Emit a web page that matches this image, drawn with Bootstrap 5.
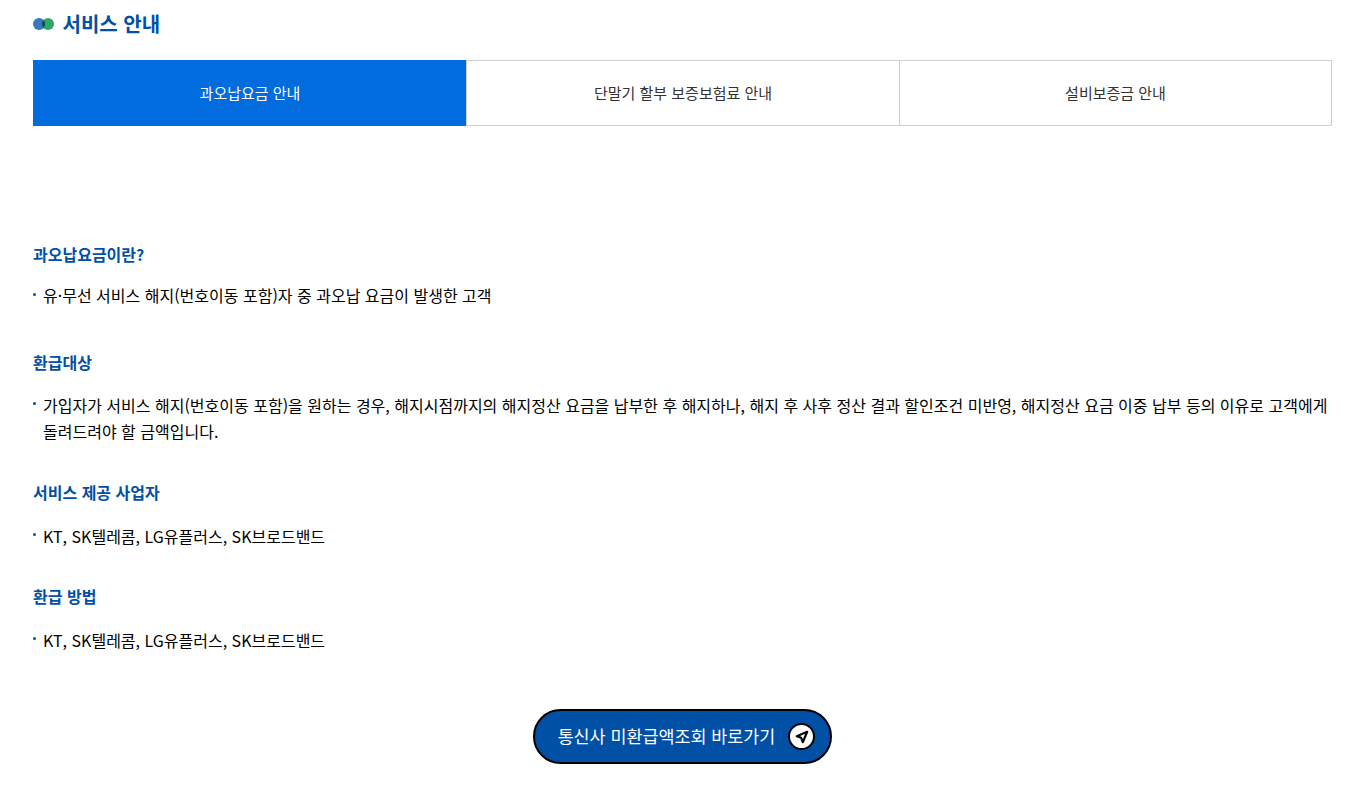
<!DOCTYPE html>
<html lang="ko">
<head>
  <meta charset="UTF-8">
  <title>서비스 안내</title>
  <meta name="viewport" content="width=device-width, initial-scale=1">
  <link href="https://cdn.jsdelivr.net/npm/bootstrap@5.3.3/dist/css/bootstrap.min.css" rel="stylesheet">
  <style>
    body { font-family: "Noto Sans CJK KR", "Noto Sans", sans-serif; color: #000; background: #fff; }
    .page-wrap { padding: 0 37px 0 33px; }
    .page-title { height: 60px; padding-bottom: 12px; color: #0050a5; font-size: 20px; font-weight: 700; gap: 8.5px; margin: 0; }
    .tab-row { height: 66px; }
    .tab-item { flex: 1 1 33.33%; border: 1px solid #d0d0d0; border-right: 0; font-size: 15px; color: #333; text-decoration: none; }
    .tab-item:last-child { border-right: 1px solid #d0d0d0; }
    .tab-item.on { background: #006cdd; border-color: #006cdd; color: #fff; }
    .info-head { color: #0050a5; font-size: 16px; font-weight: 700; line-height: 22px; margin: 0; }
    .info-list { list-style: none; padding: 0; margin: 0; font-size: 16px; line-height: 26px; }
    .info-list li { position: relative; padding-left: 10px; }
    .info-list li::before { content: ""; position: absolute; left: 0; top: 10px; width: 3px; height: 3px; border-radius: 50%; background: #0050a5; }
    .gap-first li::before { top: 11px; }
    .go-btn { width: 299px; height: 55px; padding-left: 8px; background: #0050a5; border: 2px solid #000; border-radius: 28px; color: #fff; font-size: 17.4px; gap: 13px; text-decoration: none; }
    .go-icon { width: 27px; height: 27px; background: #fff; border: 2px solid #000; border-radius: 50%; }
    .sec-first { margin-top: 117px; }
    .sec-two { margin-top: 43px; }
    .sec-three { margin-top: 37px; }
    .sec-four { margin-top: 36px; }
    .gap-first { margin-top: 17px; }
    .gap-one { margin-top: 19px; }
    .gap-two { margin-top: 20px; }
    .btn-area { margin-top: 56px; }
  </style>
</head>
<body>
  <div class="page-wrap">
    <h2 class="page-title d-flex align-items-center">
      <svg width="21" height="12" viewBox="0 0 21 12">
        <circle cx="6" cy="6" r="6" fill="#3a78bd"/>
        <circle cx="15" cy="6" r="6" fill="#30a56c"/>
        <path d="M10.5 2.03A6 6 0 0 1 10.5 9.97A6 6 0 0 1 10.5 2.03z" fill="#0c4658"/>
      </svg>
      서비스 안내
    </h2>

    <div class="tab-row d-flex">
      <a href="#" class="tab-item on d-flex align-items-center justify-content-center">과오납요금 안내</a>
      <a href="#" class="tab-item d-flex align-items-center justify-content-center">단말기 할부 보증보험료 안내</a>
      <a href="#" class="tab-item d-flex align-items-center justify-content-center">설비보증금 안내</a>
    </div>

    <h3 class="info-head sec-first">과오납요금이란?</h3>
    <ul class="info-list gap-first"><li>유·무선 서비스 해지(번호이동 포함)자 중 과오납 요금이 발생한 고객</li></ul>

    <h3 class="info-head sec-two">환급대상</h3>
    <ul class="info-list gap-one"><li>가입자가 서비스 해지(번호이동 포함)을 원하는 경우, 해지시점까지의 해지정산 요금을 납부한 후 해지하나, 해지 후 사후 정산 결과 할인조건 미반영, 해지정산 요금 이중 납부 등의 이유로 고객에게 돌려드려야 할 금액입니다.</li></ul>

    <h3 class="info-head sec-three">서비스 제공 사업자</h3>
    <ul class="info-list gap-two"><li>KT, SK텔레콤, LG유플러스, SK브로드밴드</li></ul>

    <h3 class="info-head sec-four">환급 방법</h3>
    <ul class="info-list gap-two"><li>KT, SK텔레콤, LG유플러스, SK브로드밴드</li></ul>

    <div class="d-flex justify-content-center btn-area">
      <a href="#" class="go-btn d-flex align-items-center justify-content-center">
        통신사 미환급액조회 바로가기
        <span class="go-icon d-flex align-items-center justify-content-center">
          <svg width="14" height="14" viewBox="0 0 14 14"><path d="M12.2 1.8 1.8 6.2 6.2 7.8 7.8 12.2z" fill="none" stroke="#000" stroke-width="2.2" stroke-linejoin="round"/></svg>
        </span>
      </a>
    </div>
  </div>
  <script src="https://cdn.jsdelivr.net/npm/bootstrap@5.3.3/dist/js/bootstrap.bundle.min.js"></script>
</body>
</html>
